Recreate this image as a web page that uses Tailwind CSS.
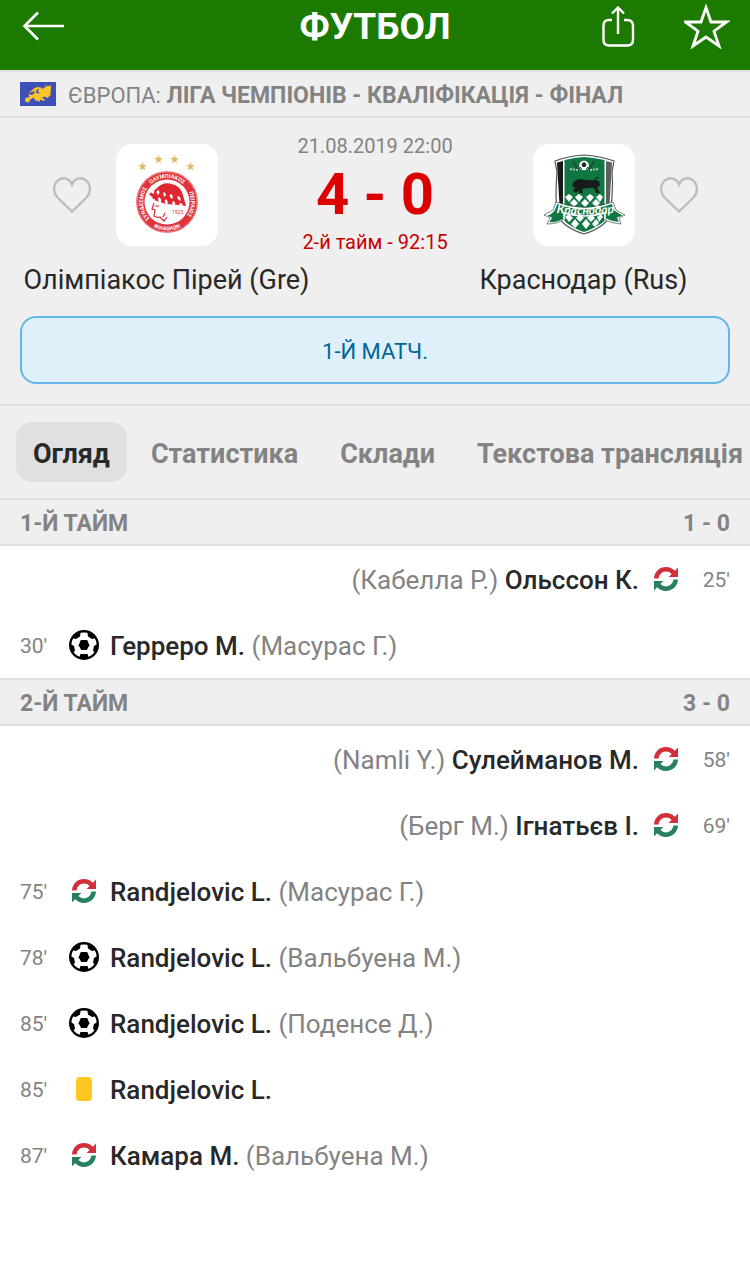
<!DOCTYPE html>
<html lang="uk">
<head>
<meta charset="utf-8">
<meta name="viewport" content="width=device-width, initial-scale=1">
<title>Футбол</title>
<script src="https://cdn.jsdelivr.net/npm/@tailwindcss/browser@4"></script>
</head>
<body class="min-h-screen bg-white font-['Roboto','Noto_Sans',sans-serif] text-[#282828]">

<svg class="hidden" aria-hidden="true">
  <symbol id="ball" viewBox="-15 -15 30 30">
    <circle r="15" fill="#000"/>
    <path fill="#fff" d="M-3.400-12.200Q0-13 3.400-12.200L4-8.400 8-6 10.800-6.400Q12.500-4 12.600-.6L10 1 9 5.600 10.400 7.400Q8 10.600 4.400 11.800L3.600 9-3.600 9-4.400 11.800Q-8 10.600-10.400 7.400L-9 5.600-10 1-12.600-.6Q-12.500-4-10.800-6.400L-8-6-4-8.400Z"/>
    <path fill="#000" d="M-3.200-5H3.200L5.400.2 2.800 5H-2.800L-5.400.2Z"/>
  </symbol>
  <symbol id="swap" viewBox="0 0 24 24">
    <path fill="#d32f3a" d="M0 11.400C.4 4.800 5.400 0 12 0c3.500 0 6.700 1.500 8.900 3.800L24 0.600V10H14.600l3-3A7.600 7.600 0 0 0 12 4.600c-3.800 0-6.800 2.800-7.400 6.800Z"/>
    <path fill="#278161" d="M24 12.600C23.600 19.200 18.600 24 12 24c-3.500 0-6.700-1.500-8.900-3.800L0 23.400V14H9.400l-3 3A7.600 7.600 0 0 0 12 19.400c3.800 0 6.800-2.800 7.400-6.800Z"/>
  </symbol>
  <symbol id="heart" viewBox="0 0 38 36">
    <path fill="none" stroke="#bdbdbd" stroke-width="2.400" d="M19 34.500L4.500 20.500C-1 14.500.8 6.500 5.500 3 10-.2 16.500.8 19 7.500 21.500.8 28-.2 32.500 3 37.200 6.500 39 14.500 33.500 20.500Z"/>
  </symbol>
  <symbol id="star" viewBox="-10 -10 20 20">
    <path fill="#e0b765" d="M0-10L2.600-3.400 9.500-3.100 4.100 1.300 5.900 8.100 0 4.300-5.900 8.100-4.100 1.300-9.500-3.100-2.600-3.400Z"/>
  </symbol>
</svg>

<header class="grid h-[70px] grid-cols-[1fr_auto_1fr] items-start bg-[#1c7a00] px-5 text-white">
  <button type="button" aria-label="Назад" class="mt-[11px] w-fit">
    <svg class="h-[30px] w-[46px]" viewBox="0 0 46 30" fill="none" stroke="#fff" stroke-width="2.600"><path d="M44 15H5M18 1.500L4.500 15 18 28.500"/></svg>
  </button>
  <h1 class="mt-1 text-[37px] leading-[46px] font-bold">ФУТБОЛ</h1>
  <div class="flex justify-end gap-12">
    <button type="button" aria-label="Поділитися" class="mt-[3px]">
      <svg class="h-[43px] w-[34px]" viewBox="0 0 34 43" fill="none" stroke="#fff" stroke-width="2.400"><path d="M10 15H7Q1.500 15 1.500 21V34.500Q1.500 40.500 7 40.500H25.500Q31 40.500 31 34.500V21Q31 15 25.500 15H22M16 29V2M10 8.500L16 2.500 22 8.500"/></svg>
    </button>
    <button type="button" aria-label="Додати в обране" class="mt-[3px]">
      <svg class="h-[46px] w-[46px]" viewBox="0 0 46 46" fill="none" stroke="#fff" stroke-width="2.800"><path d="M22 4.500L27 19H42.500L30 28.200 35 43 22 34 9 43 14 28.200 1.500 19H17Z"/></svg>
    </button>
  </div>
</header>

<div class="flex h-12 items-center gap-3 border-y-2 border-[#e0e0e0] bg-[#efefef] px-5">
  <svg class="h-6 w-9 shrink-0" viewBox="0 0 36 24" role="img" aria-label="Європа">
    <path fill="#3d50b8" d="M0 0H36V24H0Z"/>
    <path fill="#fbc52d" d="M5 19.500L5.500 16 9.500 15 8.500 12 12 13 14.500 11 14 8.500 12 10.500 11 9 14 6.500 17 5 21 5.500 22 7 26 4.500 31 3.500 30.500 13 27.500 16 24 14.500 22 16 25 17.500 24 19 20 17.500 19.500 20 17.500 18.500 16.500 15.500 17.500 19 15.500 18.500 13.500 15.500 10.500 17.500 8.500 20.500Z"/>
    <path fill="#3d50b8" d="M15.500 10.500L17 7.500 19 7 17.500 10.500 20 10 18.500 11.800Z"/>
    <path fill="#fbc52d" d="M9.500 10L11 8.500 10.500 11.500ZM25 3.500L27 2.500 26 4Z"/>
  </svg>
  <p class="truncate pt-1 text-[22px] leading-7 text-[#838383]">ЄВРОПА: <a href="#league" class="text-[23px] font-bold">ЛІГА ЧЕМПІОНІВ - КВАЛІФІКАЦІЯ - ФІНАЛ</a></p>
</div>

<main>
<section class="border-b-2 border-[#e0e0e0] bg-[#efefef] px-5 pt-[14px] pb-5">
  <div class="flex">
    <div class="flex min-w-0 flex-1 flex-col items-center gap-4 pt-3">
      <div class="flex items-center gap-[25px]">
        <button type="button" aria-label="Стежити за Олімпіакос Пірей"><svg class="h-9 w-[38px]"><use href="#heart"/></svg></button>
        <a href="#home" aria-label="Олімпіакос Пірей" class="size-[102px] rounded-2xl bg-white">
          <svg class="size-full" viewBox="0 0 102 102">
            <use href="#star" x="22" y="18" width="9" height="9"/><use href="#star" x="38" y="11" width="9" height="9"/>
            <use href="#star" x="54" y="11" width="9" height="9"/><use href="#star" x="70" y="18" width="9" height="9"/>
            <circle cx="51" cy="58" r="30.800" fill="#e0333c"/>
            <circle cx="51" cy="58" r="30" fill="none" stroke="#fff" stroke-width=".4"/>
            <circle cx="51" cy="58" r="22.500" fill="#fff"/>
            <path id="arc-top" fill="none" d="M34 41A24 24 0 0 1 68 41"/>
            <path id="arc-left" fill="none" d="M35.600 76.400A24 24 0 0 1 32.600 42.600"/>
            <path id="arc-right" fill="none" d="M69.400 42.600A24 24 0 0 1 66.400 76.400"/>
            <path id="arc-low" fill="none" d="M34.700 81.300A28.500 28.500 0 0 0 67.300 81.300"/>
            <g fill="#fff" font-size="5.500" font-weight="700" text-anchor="middle">
              <text><textPath href="#arc-left" startOffset="50%">ΣΥΝΔΕΣΜΟΣ</textPath></text>
              <text><textPath href="#arc-top" startOffset="50%">ΟΛΥΜΠΙΑΚΟΣ</textPath></text>
              <text><textPath href="#arc-right" startOffset="50%">ΠΕΙΡΑΙΩΣ</textPath></text>
              <text><textPath href="#arc-low" startOffset="50%">ΦΙΛΑΘΛΩΝ</textPath></text>
            </g>
            <path fill="#df2731" d="M40 45Q46 38 54 39.500 65 41 67.500 53L70 62 62 61 50 60 38 56 33 50Z"/>
            <path fill="#fff" d="M36 45Q33 47 37 50 40 47 36 45ZM32 51Q32 54 37 54 35 51 32 51ZM35 58Q39 59 39 55 35 55 35 58ZM42 46Q39 48 42 51 45 48 42 46ZM43 53Q41 56 44 59 47 56 43 53ZM48 48Q46 50 49 53 51 50 48 48ZM50 55Q47 58 51 61 53 58 50 55ZM55 50Q52 52 56 55 58 52 55 50ZM57 57Q55 60 58 62 61 59 57 57ZM62 52Q60 54 64 57 66 54 62 52ZM64 59Q62 61 66 62 68 60 64 59Z"/>
            <path fill="none" stroke="#df2731" stroke-width="1.200" d="M38 59L36 65 39 66 38 72Q41 74 44 73L48 77 51 73M39 62H43M49 69L47 73"/>
            <text x="56" y="70" font-size="5" fill="#df2731">1925</text>
          </svg>
        </a>
        <span class="w-[38px]"></span>
      </div>
      <h2 class="text-[27px] leading-9 whitespace-nowrap">Олімпіакос Пірей (Gre)</h2>
    </div>

    <div class="flex w-[124px] shrink-0 flex-col items-center whitespace-nowrap">
      <time class="text-[20px] leading-7 text-[#838383]">21.08.2019 22:00</time>
      <strong class="text-[58px] leading-[68px] font-bold text-[#dc0000]">4 - 0</strong>
      <span class="text-[20px] leading-7 text-[#c80000]">2-й тайм - 92:15</span>
    </div>

    <div class="flex min-w-0 flex-1 flex-col items-center gap-4 pt-3">
      <div class="flex items-center gap-[25px]">
        <span class="w-[38px]"></span>
        <a href="#away" aria-label="Краснодар" class="size-[102px] rounded-2xl bg-white">
          <svg class="size-full" viewBox="0 0 102 102">
            <path fill="#fff" stroke="#4c5753" stroke-width="1.200" d="M22 17Q35 12 51 11 67 12 81 17L79 28Q80 40 79 52L78 70Q73 83 51 90 29 83 24 70L23 52Q23 40 24 28Z"/>
            <path fill="#171b1a" d="M24 18.500L30 17V76L27 70Z"/>
            <path fill="#5b615f" d="M79 18.500L73 17V76L76 70Z"/>
            <path fill="#107743" d="M31.500 16Q42 13.500 51 13 60 13.500 71.500 16V77Q63 84 51 88 39 84 31.500 77Z"/>
            <path fill="#fff" d="M32 53L36 50 40 53 36 58ZM42 53L46 50 50 53 46 58ZM53 53L57 50 61 53 57 58ZM63 53L67 50 70 53 67 58ZM37 59L41 55 45 59 41 63ZM48 59L52 55 56 59 52 63ZM59 59L63 55 67 59 63 63ZM32 73L36 70 40 74 36 78ZM43 74L47 70 51 74 47 78ZM54 74L58 70 62 74 58 78ZM64 73L68 70 70 73 66 78ZM38 80L42 75 46 80 42 84ZM49 80L53 75 57 80 53 85ZM59 80L63 75 66 79 62 83Z"/>
            <path fill="none" stroke="#263c31" stroke-width="1.500" d="M40 17L45 26M61 17L56 26"/>
            <path fill="none" stroke="#a9c9b8" stroke-width="2" stroke-dasharray="2 1" d="M37 25L45 26M57 26L65 25"/>
            <circle cx="51" cy="21.500" r="4.800" fill="#fff"/><path d="M49 20L51 18.500 53 20 52.300 22.500H49.700ZM47 23L49 25M55 23L53 25" fill="#252927" stroke="#252927"/>
            <path fill="#171b1a" d="M39 42Q40 36 47 35 54 37 62 36L66 37 67 41 64 44 67 49 63 49 61 44 55 44 49 45 50 49 46 49 46 46 43 49 40 47 42 44Z"/><path fill="none" stroke="#171b1a" d="M63 37Q61 32 66 34"/>
            <path fill="#107743" stroke="#fff" stroke-width="1.500" d="M24 59Q52 70 79 59L82 66Q87 69 91 72L85 74 87 79Q78 78 72 75V69Q52 75 31 69V75Q25 79 15 79L18 74 12 72Q18 70 21 66Z"/>
            <path fill="none" stroke="#40504a" stroke-width=".7" d="M23 58Q52 68 80 58L83 66 92 71 86 74 88 80Q77 79 71 75M31 75Q25 80 14 80L17 74 11 71 20 66 23 58"/>
            <path id="ribbon" fill="none" d="M24 69Q51 72 81 69"/>
            <text font-family="Lato, sans-serif" font-size="12" font-style="italic" font-weight="700" fill="#fff"><textPath href="#ribbon" startOffset="50%" text-anchor="middle">Краснодар</textPath></text>
          </svg>
        </a>
        <button type="button" aria-label="Стежити за Краснодар"><svg class="h-9 w-[38px]"><use href="#heart"/></svg></button>
      </div>
      <h2 class="text-[27px] leading-9 whitespace-nowrap">Краснодар (Rus)</h2>
    </div>
  </div>
  <p class="mt-[18px] rounded-2xl border-2 border-[#64b6e6] bg-[#dff0fb] pt-5 pb-4 text-center text-[22px] leading-7 text-[#006699]">1-Й МАТЧ.</p>
</section>

<nav class="flex gap-1.5 overflow-hidden border-b-2 border-[#e0e0e0] bg-[#efefef] px-4 py-4 text-[27px] leading-[56px] font-bold whitespace-nowrap text-[#838383]">
  <a href="#overview" aria-current="page" class="rounded-2xl bg-[#e0e0e0] px-[17px] pt-1 text-[#282828]">Огляд</a>
  <a href="#stats" class="px-[18px] pt-1">Статистика</a>
  <a href="#lineups" class="px-[18px] pt-1">Склади</a>
  <a href="#commentary" class="px-[18px] pt-1">Текстова трансляція</a>
</nav>

<section>
  <h3 class="flex justify-between border-b-2 border-[#e0e0e0] bg-[#efefef] px-5 pt-1 text-[23px] leading-10 font-bold text-[#838383]"><span>1-Й ТАЙМ</span><span>1 - 0</span></h3>
  <ul class="text-[26px] leading-8 text-[#838383]">
    <li class="flex h-[66px] flex-row-reverse items-center px-5"><span class="w-12 pt-0.5 text-right text-[21px]">25'</span><span class="flex w-8 justify-center"><svg class="size-6"><use href="#swap"/></svg></span><p class="px-[11px] pt-0.5">(Кабелла Р.) <a href="#p1" class="font-medium text-[#282828]">Ольссон К.</a></p></li>
    <li class="flex h-[66px] items-center px-5"><span class="w-12 pt-0.5 text-[21px]">30'</span><span class="flex w-8 justify-center"><svg class="size-[30px]"><use href="#ball"/></svg></span><p class="px-[10px] pt-0.5"><a href="#p2" class="font-medium text-[#282828]">Герреро М.</a> (Масурас Г.)</p></li>
  </ul>
</section>

<section>
  <h3 class="flex justify-between border-y-2 border-[#e0e0e0] bg-[#efefef] px-5 pt-1 text-[23px] leading-10 font-bold text-[#838383]"><span>2-Й ТАЙМ</span><span>3 - 0</span></h3>
  <ul class="text-[26px] leading-8 text-[#838383]">
    <li class="flex h-[66px] flex-row-reverse items-center px-5"><span class="w-12 pt-0.5 text-right text-[21px]">58'</span><span class="flex w-8 justify-center"><svg class="size-6"><use href="#swap"/></svg></span><p class="px-[11px] pt-0.5">(Namli Y.) <a href="#p3" class="font-medium text-[#282828]">Сулейманов М.</a></p></li>
    <li class="flex h-[66px] flex-row-reverse items-center px-5"><span class="w-12 pt-0.5 text-right text-[21px]">69'</span><span class="flex w-8 justify-center"><svg class="size-6"><use href="#swap"/></svg></span><p class="px-[11px] pt-0.5">(Берг М.) <a href="#p4" class="font-medium text-[#282828]">Ігнатьєв І.</a></p></li>
    <li class="flex h-[66px] items-center px-5"><span class="w-12 pt-0.5 text-[21px]">75'</span><span class="flex w-8 justify-center"><svg class="size-6"><use href="#swap"/></svg></span><p class="px-[10px] pt-0.5"><a href="#p5" class="font-medium text-[#282828]">Randjelovic L.</a> (Масурас Г.)</p></li>
    <li class="flex h-[66px] items-center px-5"><span class="w-12 pt-0.5 text-[21px]">78'</span><span class="flex w-8 justify-center"><svg class="size-[30px]"><use href="#ball"/></svg></span><p class="px-[10px] pt-0.5"><a href="#p5" class="font-medium text-[#282828]">Randjelovic L.</a> (Вальбуена М.)</p></li>
    <li class="flex h-[66px] items-center px-5"><span class="w-12 pt-0.5 text-[21px]">85'</span><span class="flex w-8 justify-center"><svg class="size-[30px]"><use href="#ball"/></svg></span><p class="px-[10px] pt-0.5"><a href="#p5" class="font-medium text-[#282828]">Randjelovic L.</a> (Поденсе Д.)</p></li>
    <li class="flex h-[66px] items-center px-5"><span class="w-12 pt-0.5 text-[21px]">85'</span><span class="flex w-8 justify-center"><span class="h-6 w-4 rounded bg-[#fac81e]" role="img" aria-label="Жовта картка"></span></span><p class="px-[10px] pt-0.5"><a href="#p5" class="font-medium text-[#282828]">Randjelovic L.</a></p></li>
    <li class="flex h-[66px] items-center px-5"><span class="w-12 pt-0.5 text-[21px]">87'</span><span class="flex w-8 justify-center"><svg class="size-6"><use href="#swap"/></svg></span><p class="px-[10px] pt-0.5"><a href="#p6" class="font-medium text-[#282828]">Камара М.</a> (Вальбуена М.)</p></li>
  </ul>
</section>
</main>
</body>
</html>
